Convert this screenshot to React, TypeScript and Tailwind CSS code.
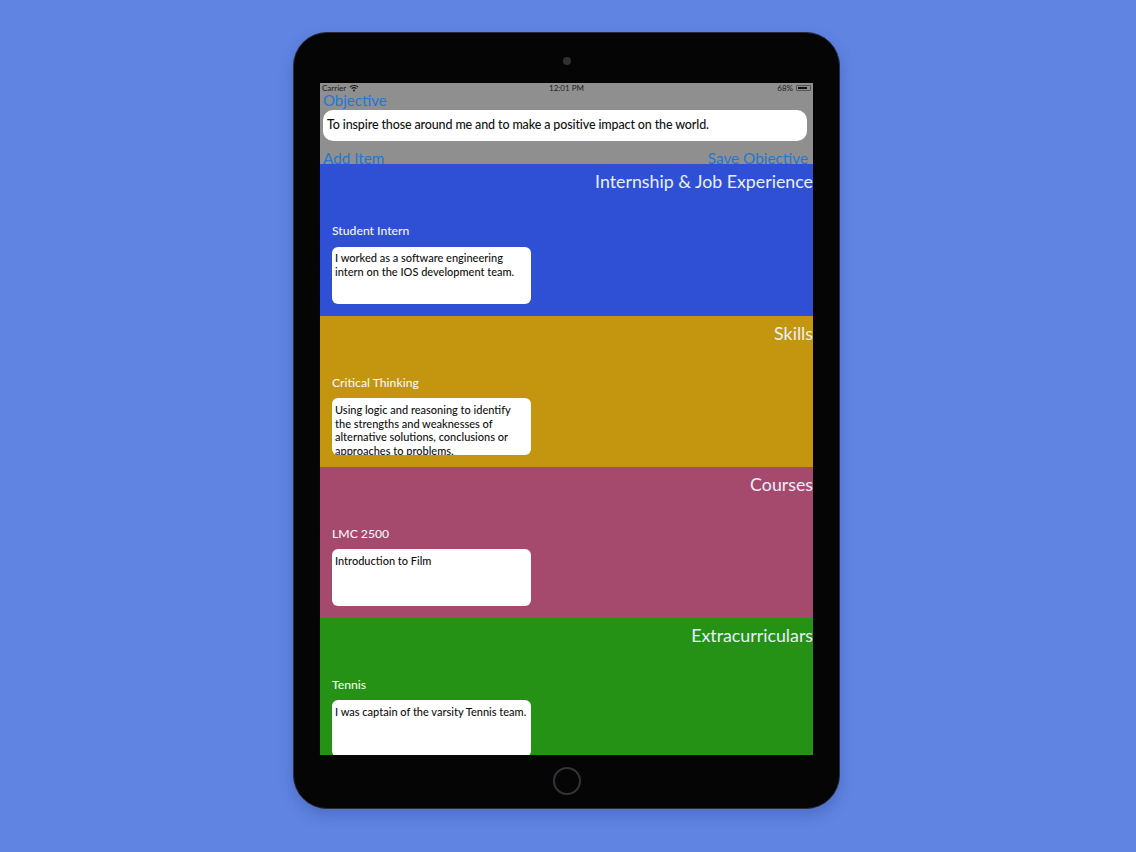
import React from "react";

const sections = [
  { bg: "bg-[#2f50d4] h-[152px]", pad: "pt-[4px]", gap: "mt-[8px]", title: "Internship & Job Experience", label: "Student Intern", text: "I worked as a software engineering intern on the IOS development team." },
  { bg: "bg-[#c4950e] h-[151px]", pad: "pt-[5px]", gap: "mt-[7px]", title: "Skills", label: "Critical Thinking", text: "Using logic and reasoning to identify the strengths and weaknesses of alternative solutions, conclusions or approaches to problems." },
  { bg: "bg-[#a54a6d] h-[151px]", pad: "pt-[5px]", gap: "mt-[7px]", title: "Courses", label: "LMC 2500", text: "Introduction to Film" },
  { bg: "bg-[#259216] h-[151px]", pad: "pt-[5px]", gap: "mt-[7px]", title: "Extracurriculars", label: "Tennis", text: "I was captain of the varsity Tennis team." },
];

export default function App() {
  return (
    <div className="w-[1136px] h-[852px] overflow-hidden bg-[#5f84e2] pt-[32px] pl-[293px] font-['Lato','Liberation_Sans',sans-serif]">
      <div className="w-[547px] h-[777px] rounded-[34px] bg-[#050506] border border-[#2a2c3c] flex flex-col items-center shadow-[0_6px_14px_rgba(50,70,140,0.35)]">
        <div className="h-[50px] w-full flex items-center justify-center pt-[6px]">
          <div className="w-[8px] h-[8px] rounded-full bg-[#2f3033]" />
        </div>
        <div className="w-[493px] h-[672px] overflow-hidden flex flex-col">
          <div className="h-[81px] shrink-0 bg-[#8f8f8f] flex flex-col">
            <div className="h-[10px] shrink-0 flex items-center justify-between px-[2px] text-[8px] leading-none text-[#1c1c1c]">
              <div className="flex-1 flex items-center gap-[3px]">
                <span>Carrier</span>
                <svg width="10" height="8" viewBox="0 0 10 8" className="fill-none stroke-[#111]">
                  <path d="M1 3 C3 1 7 1 9 3" strokeWidth="1.1" />
                  <path d="M2.6 4.6 C4 3.5 6 3.5 7.4 4.6" strokeWidth="1.1" />
                  <circle cx="5" cy="6.5" r="0.9" fill="#111" stroke="none" />
                </svg>
              </div>
              <span>12:01 PM</span>
              <div className="flex-1 flex items-center justify-end gap-[3px]">
                <span>68%</span>
                <div className="w-[15px] h-[6px] border border-[#555] rounded-[1px] p-px">
                  <div className="w-[9px] h-full bg-[#111]" />
                </div>
              </div>
            </div>
            <div className="pl-[3px] text-[15px] leading-[14px] text-[#1f78d2]">Objective</div>
            <div className="mt-[3px] ml-[3px] w-[484px] h-[31px] shrink-0 rounded-[10px] bg-white flex items-center pl-[4px] text-[12.5px] font-medium text-[#111] tracking-[-0.13px]">
              To inspire those around me and to make a positive impact on the world.
            </div>
            <div className="mt-[9px] px-[3px] pr-[5px] flex justify-between text-[15.3px] leading-[16px] text-[#1f78d2]">
              <span>Add Item</span>
              <span>Save Objective</span>
            </div>
          </div>
          {sections.map((s) => (
            <div key={s.title} className={`${s.bg} shrink-0 flex flex-col`}>
              <div className="mt-[6px] text-right text-[17.8px] leading-[22px] text-[#e9eefc]">{s.title}</div>
              <div className="mt-[31px] ml-[12px] text-[12.2px] leading-[16px] font-medium text-[#f2f4fb]">{s.label}</div>
              <div className={`${s.gap} ${s.pad} ml-[12px] w-[199px] h-[57px] shrink-0 overflow-hidden rounded-[6px] bg-white px-[3px] text-[11px] leading-[13.5px] font-medium text-[#111]`}>
                {s.text}
              </div>
            </div>
          ))}
        </div>
        <div className="flex-1 w-full flex items-center justify-center pb-[2px]">
          <div className="w-[28px] h-[28px] rounded-full border-2 border-[#333437]" />
        </div>
      </div>
    </div>
  );
}
